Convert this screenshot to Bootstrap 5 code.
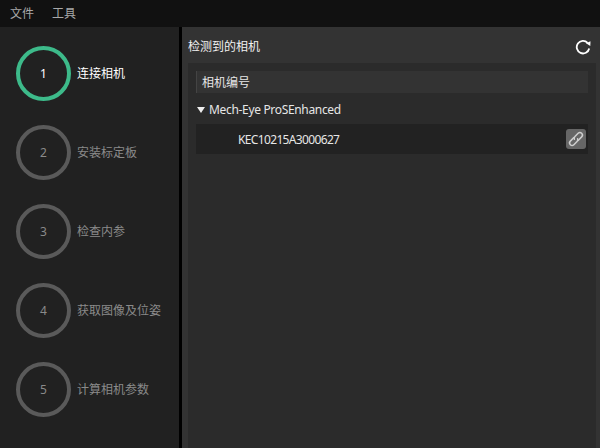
<!DOCTYPE html>
<html lang="zh">
<head>
  <meta charset="UTF-8">
  <title>相机标定</title>
  <link href="https://cdn.jsdelivr.net/npm/bootstrap@5.3.3/dist/css/bootstrap.min.css" rel="stylesheet">
  <style>
    html, body { height: 100%; }
    body {
      width: 600px; height: 448px; overflow: hidden;
      background-color: #000;
      font-family: "Noto Sans", "Noto Sans CJK SC", sans-serif;
      font-size: 12px; color: #e6e6e6;
    }
    .menu-strip { height: 27px; background-color: #111; padding-left: 10px; gap: 18px; }
    .menu-strip span { color: #a8a8a8; line-height: 27px; }
    .main-area { height: 421px; }
    .step-side { width: 179px; background-color: #212121; padding: 19px 0 0 16px; gap: 24px; }
    .step-row { height: 55px; }
    .step-ring {
      width: 55px; height: 55px; border-radius: 50%;
      border: 4px solid #5a5a5a; color: #8a8a8a;
    }
    .step-name { margin-left: 6px; color: #8a8a8a; }
    .step-row.on .step-ring { border-color: #3dba8a; color: #fff; }
    .step-row.on .step-name { color: #fff; }
    .cam-panel { margin-left: 3px; width: 418px; background-color: #333; padding: 0 4px 0 6px; }
    .cam-head { height: 36px; padding-top: 3px; }
    .cam-title { color: #f0f0f0; }
    .cam-body { background-color: #2b2b2b; padding: 8px 8px 0; }
    .col-head { height: 22px; background-color: #333; border-left: 1px solid #444; padding: 1px 0 0 5px; color: #e6e6e6; }
    .tree-group { height: 31px; padding: 2px 0 0 1px; color: #e6e6e6; gap: 4px; }
    .tree-group .tree-text { letter-spacing: -0.33px; }
    .tree-arrow { width: 0; height: 0; border-left: 4px solid transparent; border-right: 4px solid transparent; border-top: 6px solid #eee; }
    .cam-row { height: 30px; background-color: #222; padding: 0 2px 0 42px; }
    .cam-row .serial-text { letter-spacing: -0.65px; padding-top: 1px; }
    .link-box { width: 20px; height: 20px; border-radius: 3px; background-color: #666; }
  </style>
</head>
<body>
  <div class="menu-strip d-flex">
    <span>文件</span>
    <span>工具</span>
  </div>
  <div class="main-area d-flex">
    <div class="step-side d-flex flex-column">
      <div class="step-row on d-flex align-items-center"><div class="step-ring d-flex align-items-center justify-content-center">1</div><div class="step-name">连接相机</div></div>
      <div class="step-row d-flex align-items-center"><div class="step-ring d-flex align-items-center justify-content-center">2</div><div class="step-name">安装标定板</div></div>
      <div class="step-row d-flex align-items-center"><div class="step-ring d-flex align-items-center justify-content-center">3</div><div class="step-name">检查内参</div></div>
      <div class="step-row d-flex align-items-center"><div class="step-ring d-flex align-items-center justify-content-center">4</div><div class="step-name">获取图像及位姿</div></div>
      <div class="step-row d-flex align-items-center"><div class="step-ring d-flex align-items-center justify-content-center">5</div><div class="step-name">计算相机参数</div></div>
    </div>
    <div class="cam-panel d-flex flex-column">
      <div class="cam-head d-flex align-items-center justify-content-between">
        <span class="cam-title">检测到的相机</span>
        <svg class="me-1" width="17" height="16" viewBox="0 0 17 16" fill="none" stroke="#fff" stroke-width="1.8"><path d="M14.200 9.500A6.300 6.300 0 1 1 12.600 3.800"/><path d="M11 4.200L15.500 2.200L15.300 7z" fill="#fff" stroke="none"/></svg>
      </div>
      <div class="cam-body flex-grow-1">
        <div class="col-head d-flex align-items-center">相机编号</div>
        <div class="tree-group d-flex align-items-center"><span class="tree-arrow"></span><span class="tree-text">Mech-Eye ProSEnhanced</span></div>
        <div class="cam-row d-flex align-items-center justify-content-between">
          <span class="serial-text">KEC10215A3000627</span>
          <span class="link-box d-flex align-items-center justify-content-center">
            <svg width="20" height="20" viewBox="0 0 20 20" fill="none" stroke="#cfcfcf" stroke-width="1.5" stroke-linecap="round"><g transform="rotate(-45 10 10)"><path d="M9.500 7.500H4.500a2.500 2.500 0 0 0 0 5H9a2.500 2.500 0 0 0 2.300-1.500"/><path d="M8.700 9a2.500 2.500 0 0 1 2.300-1.500h4.500a2.500 2.500 0 0 1 0 5H10.500"/></g></svg>
          </span>
        </div>
      </div>
    </div>
  </div>
  <script src="https://cdn.jsdelivr.net/npm/bootstrap@5.3.3/dist/js/bootstrap.bundle.min.js"></script>
</body>
</html>
